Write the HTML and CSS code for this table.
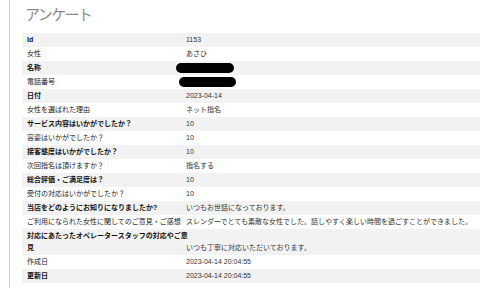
FILE: index.html
```html
<!DOCTYPE html>
<html lang="ja">
<head>
<meta charset="utf-8">
<link rel="stylesheet" href="styles.css">
</head>
<body>
<div class="page">
  <h1 class="title">アンケート</h1>
  <div class="table">
    <div class="row odd"><div class="label">Id</div><div class="value">1153</div></div>
    <div class="row"><div class="label">女性</div><div class="value">あさひ</div></div>
    <div class="row odd"><div class="label">名称</div><div class="value"><span class="redact r1"></span></div></div>
    <div class="row"><div class="label">電話番号</div><div class="value"><span class="redact r2"></span></div></div>
    <div class="row odd"><div class="label">日付</div><div class="value">2023-04-14</div></div>
    <div class="row"><div class="label">女性を選ばれた理由</div><div class="value">ネット指名</div></div>
    <div class="row odd"><div class="label">サービス内容はいかがでしたか？</div><div class="value">10</div></div>
    <div class="row"><div class="label">容姿はいかがでしたか？</div><div class="value">10</div></div>
    <div class="row odd"><div class="label">接客態度はいかがでしたか？</div><div class="value">10</div></div>
    <div class="row"><div class="label">次回指名は頂けますか？</div><div class="value">指名する</div></div>
    <div class="row odd"><div class="label">総合評価・ご満足度は？</div><div class="value">10</div></div>
    <div class="row"><div class="label">受付の対応はいかがでしたか？</div><div class="value">10</div></div>
    <div class="row odd"><div class="label">当店をどのようにお知りになりましたか?</div><div class="value">いつもお世話になっております。</div></div>
    <div class="row"><div class="label">ご利用になられた女性に関してのご意見・ご感想</div><div class="value">スレンダーでとても素敵な女性でした。話しやすく楽しい時間を過ごすことができました。</div></div>
    <div class="row odd tall"><div class="label">対応にあたったオペレータースタッフの対応やご意<br>見</div><div class="value bottom">いつも丁寧に対応いただいております。</div></div>
    <div class="row"><div class="label">作成日</div><div class="value">2023-04-14 20:04:55</div></div>
    <div class="row odd"><div class="label">更新日</div><div class="value">2023-04-14 20:04:55</div></div>
  </div>
</div>
</body>
</html>
```

FILE: styles.css
```css
html, body {
  margin: 0;
  padding: 0;
  background: #ffffff;
}

body {
  font-family: "Liberation Sans", "Noto Sans CJK JP", sans-serif;
  color: #333333;
}

.page {
  margin-left: 9px;
  border-left: 1px solid #cfcfcf;
  padding: 0 0 5px 12px;
  overflow: hidden;
}

.title {
  margin: 0 0 5px 3px;
  height: 28px;
  line-height: 28px;
  font-size: 15px;
  font-weight: normal;
  color: #8c8c8c;
  font-family: "Noto Sans CJK JP", sans-serif;
  letter-spacing: -1.6px;
}

.table {
  display: flex;
  flex-direction: column;
}

.row {
  display: grid;
  grid-template-columns: 164px 1fr;
  font-size: 7px;
  line-height: 12px;
  padding: 1px 0;
  white-space: nowrap;
}

.row.odd {
  background: #f2f2f2;
}

.label {
  padding-left: 5px;
  color: #222222;
}

.row.odd .label {
  font-weight: bold;
  color: #111111;
}

.value {
  color: #333333;
}

.value.bottom {
  align-self: end;
}

.redact {
  display: inline-block;
  height: 10px;
  border-radius: 5px;
  background: #000000;
  vertical-align: top;
}

.r1 {
  width: 58px;
  margin-left: -10px;
  margin-top: 1px;
}

.r2 {
  width: 57px;
  margin-left: -7px;
  margin-top: 1px;
}
```
